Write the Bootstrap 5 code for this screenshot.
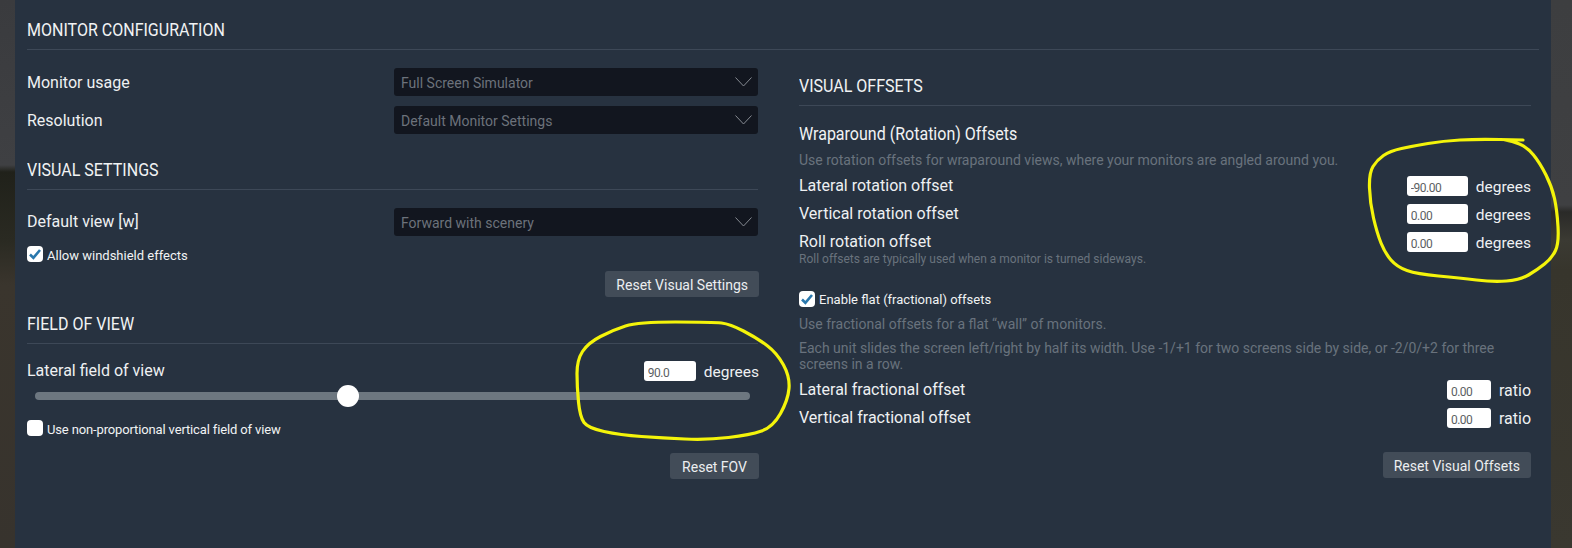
<!DOCTYPE html>
<html lang="en">
<head>
<meta charset="utf-8">
<title>Monitor Configuration</title>
<link href="https://cdn.jsdelivr.net/npm/bootstrap@5.3.0/dist/css/bootstrap.min.css" rel="stylesheet">
<style>
html,body{height:548px;overflow:hidden}
body{font-family:Roboto,"Liberation Sans",sans-serif;font-size:16px;color:#eef0f2;
 background:
  linear-gradient(180deg,#3a3b3e 0,#3f4043 165px,#20211a 172px,#2a2a22 240px,#3a352d 285px,#37332d 548px) left top/15px 100% no-repeat,
  linear-gradient(180deg,#3d3e40 0,#3f4042 205px,#2a2a28 212px,#3b3a33 240px,#37352c 270px,#3a3830 548px) right top/21px 100% no-repeat,
  #38362f}
.sim-panel{width:1536px;height:548px;margin-left:15px;background:#273240;padding:20px 12px 0;position:relative}
.sim-title{font-size:18px;line-height:20px;font-weight:400;padding-bottom:9px;border-bottom:1px solid #3d4857;margin:0;color:#f1f3f4}
.sim-cond{display:inline-block;transform:scaleX(.89);transform-origin:left center;white-space:nowrap}
.sim-title.vs{margin-top:26px;margin-bottom:18px}
.sim-title.fov{margin-top:17px;margin-bottom:17px}
.sim-leftcol{padding:18px 25px 0 0}
.sim-rightcol{padding:26px 8px 0 16px}
.sim-row{height:28px;margin-bottom:10px}
.sim-row label{line-height:28px}
.sim-row.low label{line-height:30px}
.sim-select{width:364px;height:28px;padding:2px 28px 0 7px;font-size:14px;color:#6c727b;border:0;border-radius:3px;
 background-color:#12161f;
 background-image:url("data:image/svg+xml,%3Csvg xmlns='http://www.w3.org/2000/svg' viewBox='0 0 17 10'%3E%3Cpath fill='none' stroke='%23868b92' stroke-width='1' d='M.5.5l8 8.5 8-8.5'/%3E%3C/svg%3E");
 background-position:right 6px center;background-size:17px 10px}
.sim-select:disabled{background-color:#12161f;color:#6c727b;opacity:1}
.sim-check{display:flex;align-items:center;gap:4px;height:16px;margin:0;padding:0;font-size:13px;line-height:16px;color:#f1f3f4}
.sim-check span{padding-top:3px}
.sim-check.tight{letter-spacing:-.14px;margin-top:13px}
.sim-check.flat{margin-top:25px}
.sim-check.flat span{padding-top:2px}
.sim-check .form-check-input{float:none;flex:none;width:16px;height:16px;margin:0;border:0;border-radius:4px;background-color:#fff}
.sim-check .form-check-input:checked{background-color:#fff;background-image:url("data:image/svg+xml,%3Csvg xmlns='http://www.w3.org/2000/svg' viewBox='0 0 16 16'%3E%3Cpath fill='none' stroke='%232a78ad' stroke-width='2.6' d='M3 8.5l3.4 3.3L13 4'/%3E%3C/svg%3E");background-size:16px 16px}
.sim-actions{display:flex;justify-content:flex-end}
.sim-actions.a1{margin:9px -1px 0 0}
.sim-actions.a2{margin:17px -1px 0 0}
.sim-actions.a2 .sim-btn{padding:0 12px}
.sim-actions.a3{margin-top:24px}
.sim-btn{height:26px;padding:0 11px;font-size:14px;line-height:28px;background:#424c58;color:#eceef0;border:0;border-radius:3px}
.sim-num{height:20px;padding:3px 0 0 4px;font-size:12px;line-height:16px;letter-spacing:-.5px;color:#5c5f63;border:0;border-radius:3px;background:#fff}
.sim-num.w-fov{width:52px}.sim-num.w-rot{width:61px}.sim-num.w-frac{width:44px}
.sim-unit{line-height:20px;margin-left:8px;font-size:15.5px;padding-top:2px}
.sim-unit.sim-unit-r{font-size:16px}
.sim-field{height:20px;margin-top:8px}
.sim-field.first{margin-top:6px}
.sim-field.fovrow{margin:0 -1px 0 0}
.sim-slider{display:block;width:715px;height:22px;margin:4px 0 0 8px;padding:0;background:transparent}
.sim-slider::-webkit-slider-runnable-track{height:8px;border-radius:4px;background:#6d7780}
.sim-slider::-webkit-slider-thumb{width:22px;height:22px;margin-top:-7px;border-radius:50%;background:#fff;border:0;box-shadow:none}
.sim-sub{font-size:18px;line-height:20px;margin:18px 0 0;color:#f1f3f4;font-weight:400}
.sim-help{color:#69727d;font-size:14px;line-height:20px;margin:6px 0 0}
.sim-help.tiny{font-size:12px;line-height:14px;margin:0}
.sim-help.wall{margin-top:7px}
.sim-help.para{line-height:16px}
.sim-overlay{position:absolute;left:-15px;top:0;width:1572px;height:548px;pointer-events:none}
.sim-overlay path{fill:none;stroke:#f4f40a;stroke-width:3.2;stroke-linecap:round;stroke-linejoin:round}
</style>
</head>
<body>
<div class="sim-panel">
  <h2 class="sim-title"><span class="sim-cond">MONITOR CONFIGURATION</span></h2>
  <div class="row g-0">
    <div class="col-6 sim-leftcol">
      <div class="sim-row low d-flex justify-content-between">
        <label for="usage">Monitor usage</label>
        <select id="usage" class="form-select sim-select" disabled><option>Full Screen Simulator</option></select>
      </div>
      <div class="sim-row low d-flex justify-content-between">
        <label for="res">Resolution</label>
        <select id="res" class="form-select sim-select" disabled><option>Default Monitor Settings</option></select>
      </div>
      <h2 class="sim-title vs"><span class="sim-cond">VISUAL SETTINGS</span></h2>
      <div class="sim-row d-flex justify-content-between">
        <label for="view">Default view [w]</label>
        <select id="view" class="form-select sim-select" disabled><option>Forward with scenery</option></select>
      </div>
      <label class="sim-check"><input class="form-check-input" type="checkbox" checked><span>Allow windshield effects</span></label>
      <div class="sim-actions a1"><button class="btn sim-btn" type="button">Reset Visual Settings</button></div>
      <h2 class="sim-title fov"><span class="sim-cond">FIELD OF VIEW</span></h2>
      <div class="d-flex align-items-center sim-field fovrow">
        <label class="me-auto">Lateral field of view</label>
        <input class="form-control sim-num w-fov" type="text" value="90.0" aria-label="Lateral field of view"><span class="sim-unit">degrees</span>
      </div>
      <input class="form-range sim-slider" type="range" min="0" max="1000" value="436" aria-label="Lateral field of view slider">
      <label class="sim-check tight"><input class="form-check-input" type="checkbox"><span>Use non-proportional vertical field of view</span></label>
      <div class="sim-actions a2"><button class="btn sim-btn" type="button">Reset FOV</button></div>
    </div>
    <div class="col-6 sim-rightcol">
      <h2 class="sim-title"><span class="sim-cond">VISUAL OFFSETS</span></h2>
      <h3 class="sim-sub"><span class="sim-cond">Wraparound (Rotation) Offsets</span></h3>
      <p class="sim-help">Use rotation offsets for wraparound views, where your monitors are angled around you.</p>
      <div class="d-flex align-items-center sim-field first">
        <label class="me-auto">Lateral rotation offset</label>
        <input class="form-control sim-num w-rot" type="text" value="-90.00" aria-label="Lateral rotation offset"><span class="sim-unit">degrees</span>
      </div>
      <div class="d-flex align-items-center sim-field">
        <label class="me-auto">Vertical rotation offset</label>
        <input class="form-control sim-num w-rot" type="text" value="0.00" aria-label="Vertical rotation offset"><span class="sim-unit">degrees</span>
      </div>
      <div class="d-flex align-items-center sim-field">
        <label class="me-auto">Roll rotation offset</label>
        <input class="form-control sim-num w-rot" type="text" value="0.00" aria-label="Roll rotation offset"><span class="sim-unit">degrees</span>
      </div>
      <p class="sim-help tiny">Roll offsets are typically used when a monitor is turned sideways.</p>
      <label class="sim-check flat"><input class="form-check-input" type="checkbox" checked><span>Enable flat (fractional) offsets</span></label>
      <p class="sim-help wall">Use fractional offsets for a flat “wall” of monitors.</p>
      <p class="sim-help para">Each unit slides the screen left/right by half its width. Use -1/+1 for two screens side by side, or -2/0/+2 for three screens in a row.</p>
      <div class="d-flex align-items-center sim-field">
        <label class="me-auto">Lateral fractional offset</label>
        <input class="form-control sim-num w-frac" type="text" value="0.00" aria-label="Lateral fractional offset"><span class="sim-unit sim-unit-r">ratio</span>
      </div>
      <div class="d-flex align-items-center sim-field">
        <label class="me-auto">Vertical fractional offset</label>
        <input class="form-control sim-num w-frac" type="text" value="0.00" aria-label="Vertical fractional offset"><span class="sim-unit sim-unit-r">ratio</span>
      </div>
      <div class="sim-actions a3"><button class="btn sim-btn" type="button">Reset Visual Offsets</button></div>
    </div>
  </div>
  <svg class="sim-overlay" viewBox="0 0 1572 548" aria-hidden="true">
    <path d="M675.5 322Q713 322 721.5 323Q730 324 743.5 331Q757 338 767 345.5Q777 353 783.5 365Q790 377 789 388.5Q788 400 780.5 413.5Q773 427 761.5 431Q750 435 728.5 437.5Q707 440 685 439Q663 438 641.5 436.5Q620 435 604 431.5Q588 428 584 422.5Q580 417 578.5 402Q577 387 577 373.5Q577 360 582.5 351.5Q588 343 600.5 336.5Q613 330 625.5 326Q638 322 675.5 322Z"/>
    <path d="M1523 140L1500 139.5Q1477 139 1460 140Q1443 141 1428 143.5Q1413 146 1401.5 148.5Q1390 151 1383.5 155.5Q1377 160 1373 166.5Q1369 173 1369.5 188Q1370 203 1373.5 218Q1377 233 1381 243Q1385 253 1391 260Q1397 267 1407 270.5Q1417 274 1438.5 276Q1460 278 1476.5 280Q1493 282 1506.5 281Q1520 280 1528.5 275Q1537 270 1544.5 264Q1552 258 1555.5 250.5Q1559 243 1558 226.5Q1557 210 1554.5 198.5Q1552 187 1546 175Q1540 163 1533.5 155Q1527 147 1519.5 144Q1512 141 1505 140"/>
  </svg>
</div>
<script src="https://cdn.jsdelivr.net/npm/bootstrap@5.3.0/dist/js/bootstrap.bundle.min.js"></script>
</body>
</html>
